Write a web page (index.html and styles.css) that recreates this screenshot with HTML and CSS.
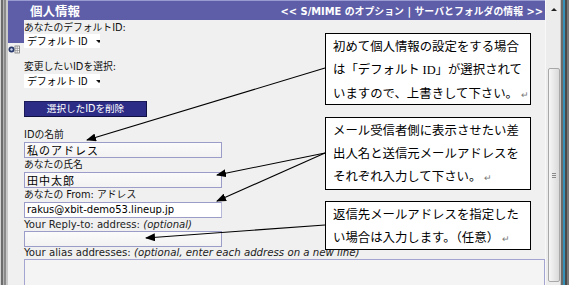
FILE: index.html
```html
<!DOCTYPE html>
<html lang="ja">
<head>
<meta charset="utf-8">
<title>個人情報</title>
<link rel="stylesheet" href="styles.css">
</head>
<body>
<div class="window">
  <div class="frame-left"></div>
  <div class="pane">
    <div class="header">
      <span class="title">個人情報</span>
      <span class="nav">&lt;&lt; S/MIME のオプション | サーバとフォルダの情報 &gt;&gt;</span>
    </div>
    <div class="body-row">
      <div class="side">
        <div class="side-top"></div>
        <svg class="side-icon" width="12" height="9" viewBox="0 0 12 9">
          <circle cx="3.5" cy="4.5" r="3" fill="#2a3a6a"/>
          <circle cx="3.5" cy="4.5" r="1.2" fill="#c8d4f0"/>
          <rect x="7" y="1" width="4.5" height="7" fill="#ffffff" stroke="#7a7a7a" stroke-width="0.8"/>
          <path d="M7 3.3h4.5M7 5.6h4.5M9.2 1v7" stroke="#7a7a7a" stroke-width="0.6"/>
        </svg>
      </div>
      <div class="content">
        <div class="label l-first">あなたのデフォルトID:</div>
        <div class="select"><span class="sel-text">デフォルト ID</span><span class="caret"></span></div>
        <div class="label l-gap">変更したいIDを選択:</div>
        <div class="select"><span class="sel-text">デフォルト ID</span><span class="caret"></span></div>
        <div class="button">選択したIDを削除</div>
        <div class="label l-name">IDの名前</div>
        <div class="input">私のアドレス</div>
        <div class="label">あなたの氏名</div>
        <div class="input">田中太郎</div>
        <div class="label">あなたの From: アドレス</div>
        <div class="input input-white latin">rakus@xbit-demo53.lineup.jp</div>
        <div class="label latin-label">Your Reply-to: address: <i>(optional)</i></div>
        <div class="input"></div>
        <div class="label latin-label short">Your alias addresses: <i>(optional, enter each address on a new line)</i></div>
        <div class="textarea"></div>
      </div>
    </div>
  </div>
  <div class="scrollbar">
    <div class="arrow-up"></div>
    <div class="thumb"><div class="grip"></div></div>
  </div>
  <div class="frame-right"></div>

  <div class="callout c1">初めて個人情報の設定をする場合<br>は「デフォルト <span class="serif">ID</span>」が選択されて<br>いますので、上書きして下さい。<span class="ret">↵</span></div>
  <div class="callout c2">メール受信者側に表示させたい差<br>出人名と送信元メールアドレスを<br>それぞれ入力して下さい。<span class="ret">↵</span></div>
  <div class="callout c3">返信先メールアドレスを指定した<br>い場合は入力します。（任意）<span class="ret">↵</span></div>

  <svg class="arrows" width="569" height="285" viewBox="0 0 569 285">
    <defs>
      <marker id="ah" markerWidth="10" markerHeight="8" refX="9" refY="4" orient="auto" markerUnits="userSpaceOnUse">
        <path d="M0 0L10 4L0 8z" fill="#000"/>
      </marker>
    </defs>
    <g stroke="#000" stroke-width="1.1" fill="none" marker-end="url(#ah)">
      <line x1="325" y1="68" x2="87" y2="140"/>
      <line x1="325" y1="153" x2="217" y2="175"/>
      <line x1="325" y1="153" x2="217" y2="201"/>
      <line x1="325" y1="225" x2="146" y2="238"/>
    </g>
  </svg>
</div>
</body>
</html>
```

FILE: styles.css
```css
* { box-sizing: border-box; }
html, body { margin: 0; padding: 0; }
body {
  width: 569px;
  height: 285px;
  overflow: hidden;
  background: #f0f0f0;
  font-family: "DejaVu Sans", "Noto Sans CJK JP", sans-serif;
  color: #000;
}
.window {
  position: relative;
  display: flex;
  width: 569px;
  height: 285px;
}
.frame-left {
  width: 8px;
  background: linear-gradient(90deg, #d4d4d4 0 1px, #6c6c6c 1px 3px, #b4b4b4 3px 4px, #8a8a8a 4px 6px, #c8c8c8 6px 8px);
}
.pane {
  width: 537px;
  display: flex;
  flex-direction: column;
}
.header {
  height: 20px;
  background: #5d5da8;
  border-top: 1px solid #9a9ad2;
  display: flex;
  align-items: center;
  justify-content: space-between;
  padding: 0 2px 0 22px;
  color: #fff;
  font-weight: bold;
  font-family: "DejaVu Sans", "Noto Sans CJK JP", sans-serif;
}
.title { font-size: 12.5px; }
.nav { font-size: 9.9px; }
.body-row {
  display: flex;
  flex: 1;
}
.side {
  width: 17px;
  display: flex;
  flex-direction: column;
}
.side-top {
  height: 23px;
  background: #5d5da8;
}
.side-icon {
  margin-top: 2px;
  display: block;
}
.content {
  flex: 1;
  display: flex;
  flex-direction: column;
  align-items: flex-start;
}
.label {
  height: 14px;
  line-height: 14px;
  font-size: 9.8px;
  white-space: nowrap;
  color: #111;
}
.l-first { margin-top: 1px; height: 13px; line-height: 13px; }
.l-gap { margin-top: 12px; }
.l-name { margin-top: 11px; height: 14px; }
.latin-label { height: 13px; line-height: 13px; font-size: 10.1px; color: #222; }
.latin-label.short { height: 12px; line-height: 12px; font-size: 10.2px; }
.select {
  width: 76px;
  height: 14px;
  background: #fff;
  display: flex;
  align-items: center;
  gap: 9px;
  padding: 0 0 0 3px;
  font-size: 10px;
  white-space: nowrap;
  overflow: hidden;
}
.sel-text { white-space: nowrap; line-height: 14px; font-family: "Noto Sans CJK JP", sans-serif; font-size: 10px; letter-spacing: -0.2px; }
.caret {
  width: 0;
  height: 0;
  border-left: 3px solid transparent;
  border-right: 3px solid transparent;
  border-top: 3px solid #111;
}
.button {
  margin-top: 13px;
  width: 123px;
  height: 16px;
  background: #2c2c86;
  border: 1px solid #1b1b5c;
  border-right-color: #101040;
  border-bottom-color: #101040;
  color: #fff;
  font-size: 9.6px;
  line-height: 14px;
  text-align: center;
  white-space: nowrap;
}
.input {
  width: 198px;
  height: 16px;
  border: 1px solid #9c9cc8;
  background: linear-gradient(#fbfbfb, #f2f2f2);
  font-size: 11px;
  line-height: 14px;
  padding: 0 2px;
  letter-spacing: 1px;
  font-family: "Noto Sans CJK JP", sans-serif;
  white-space: nowrap;
}
.input-white { background: #fff; border-right-color: #b8b8d8; }
.latin { font-family: "DejaVu Sans", sans-serif; font-size: 10px; letter-spacing: 0; }
.textarea {
  width: 521px;
  flex: 1;
  border: 1px solid #a4a4d0;
  border-bottom: none;
  background: #f4f4f4;
}
.scrollbar {
  position: relative;
  width: 15px;
  background: #ececec;
  border-left: 1px solid #f8f8f8;
}
.arrow-up {
  position: absolute;
  left: 5px;
  top: 8px;
  width: 0;
  height: 0;
  border-left: 3px solid transparent;
  border-right: 3px solid transparent;
  border-bottom: 3px solid #222;
}
.thumb {
  position: absolute;
  left: 2px;
  top: 68px;
  width: 12px;
  height: 214px;
  border: 1px solid #a8a8a8;
  border-radius: 2px;
  background: linear-gradient(90deg, #f6f6f6, #dadada);
}
.grip {
  position: absolute;
  left: 3px;
  top: 104px;
  width: 4px;
  height: 5px;
  background: repeating-linear-gradient(#8a8a8a 0 1px, transparent 1px 2px);
}
.frame-right {
  width: 9px;
  background: linear-gradient(90deg, #c4c4c4 0 1px, #6a6a6a 1px 3px, #3591b8 3px 5px, #4a4a4a 5px 7px, #7a7a7a 7px 9px);
}
.callout {
  position: absolute;
  left: 325px;
  width: 206px;
  background: #fff;
  border: 1px solid #000;
  padding: 0 0 0 7px;
  font-family: "Noto Sans CJK JP", sans-serif;
  font-size: 12.4px;
  line-height: 23px;
  white-space: nowrap;
  color: #000;
}
.c1 { top: 33px; height: 72px; padding-top: 1px; }
.c2 { top: 117px; height: 73px; padding-top: 1px; }
.c3 { top: 201px; height: 49px; padding-top: 1px; }
.serif { font-family: "Liberation Serif", serif; color: #000; }
.ret { color: #777; font-size: 9px; margin-left: 3px; }
.arrows {
  position: absolute;
  left: 0;
  top: 0;
  pointer-events: none;
}
```
